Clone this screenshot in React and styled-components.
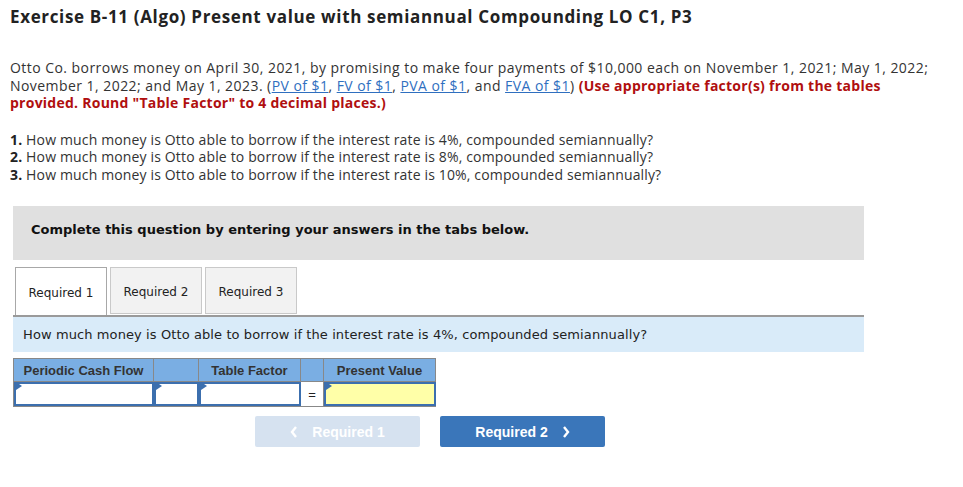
import React from "react";
import styled, { createGlobalStyle } from "styled-components";

const Global = createGlobalStyle`
  body {
    margin: 0;
    background: #ffffff;
    font-family: "Open Sans", Arial, sans-serif;
    color: #222;
  }
`;

const Page = styled.div`
  padding: 6px 0 0 10px;
  width: 953px;
`;

const Title = styled.h1`
  margin: 0;
  font-size: 17px;
  line-height: 22px;
  font-weight: 700;
  letter-spacing: 0.65px;
  color: #222;
`;

const Para = styled.p`
  margin: 31px 0 0;
  font-size: 14px;
  line-height: 17.5px;
  letter-spacing: 0.45px;
  color: #333;
  white-space: nowrap;
`;

const Link = styled.a`
  color: #2f6fbf;
  text-decoration: underline;
`;

const Red = styled.span`
  color: #b00f0f;
  font-weight: 700;
  letter-spacing: 0.25px;
`;

const List = styled.div`
  margin-top: 19px;
  font-size: 14px;
  line-height: 17.5px;
  letter-spacing: 0.15px;
  color: #333;
`;

const Num = styled.b`
  color: #222;
`;

const Notice = styled.div`
  margin: 23px 0 0 3px;
  width: 851px;
  height: 54px;
  background: #e0e0e0;
  display: flex;
  align-items: center;
  padding: 0 0 8px 18px;
  box-sizing: border-box;
  font-family: "DejaVu Sans", Verdana, sans-serif;
  font-size: 13px;
  font-weight: 700;
  color: #111;
`;

const Tabs = styled.div`
  margin: 7px 0 0 5px;
  display: flex;
  gap: 3px;
  position: relative;
  z-index: 1;
`;

const Tab = styled.div`
  width: 92px;
  height: ${(p) => (p.$active ? "48px" : "47px")};
  box-sizing: border-box;
  border: 1px solid ${(p) => (p.$active ? "#a8a8a8" : "#c9c9c9")};
  border-bottom: ${(p) => (p.$active ? "none" : "1px solid #c9c9c9")};
  background: ${(p) => (p.$active ? "#ffffff" : "#f2f2f2")};
  display: flex;
  align-items: center;
  justify-content: center;
  padding-top: ${(p) => (p.$active ? "2px" : "3px")};
  font-family: "DejaVu Sans", Verdana, sans-serif;
  font-size: 12px;
  color: #222;
`;

const Question = styled.div`
  margin-left: 3px;
  width: 851px;
  height: 37px;
  box-sizing: border-box;
  border-top: 2px solid #9a9a9a;
  background: #d9ebf9;
  display: flex;
  align-items: center;
  padding-left: 10px;
  font-family: "DejaVu Sans", Verdana, sans-serif;
  font-size: 13px;
  letter-spacing: 0.1px;
  color: #222;
`;

const Grid = styled.div`
  margin: 6px 0 0 3px;
  display: grid;
  grid-template-columns: 140px 45px 102px 23px 112px;
  grid-template-rows: 23px 24px;
  width: 422px;
  border: 1px solid #888;
  border-right: none;
`;

const Head = styled.div`
  background: #7aaee3;
  border-right: 1px solid #888;
  border-bottom: 1px solid #888;
  display: flex;
  align-items: center;
  justify-content: center;
  font-family: "Liberation Sans", Arial, sans-serif;
  font-size: 13px;
  font-weight: 700;
  color: #333;
`;

const Cell = styled.div`
  position: relative;
  background: ${(p) => (p.$yellow ? "#ffffa8" : "#ffffff")};
  border: 2px solid #3c6fae;
  box-sizing: border-box;
  &::before {
    content: "";
    position: absolute;
    top: -2px;
    left: 0;
    border-top: 4px solid transparent;
    border-bottom: 4px solid transparent;
    border-left: 6px solid #3c6fae;
  }
`;

const Eq = styled.div`
  background: #fff;
  border-right: 1px solid #888;
  display: flex;
  align-items: center;
  justify-content: center;
  font-family: "Liberation Sans", Arial, sans-serif;
  font-size: 13px;
  color: #222;
`;

const Nav = styled.div`
  margin: 9px 0 0 245px;
  display: flex;
  gap: 20px;
`;

const NavBtn = styled.button`
  width: 165px;
  height: 31px;
  border: none;
  border-radius: 2px;
  background: ${(p) => (p.$disabled ? "#d6e2f0" : "#3a76ba")};
  color: #ffffff;
  font-family: "Liberation Sans", Arial, sans-serif;
  font-size: 14px;
  font-weight: 700;
  display: flex;
  align-items: center;
  justify-content: center;
  gap: 14px;
  padding: 0;
`;

const Chevron = ({ dir }) => (
  <svg width="8" height="12" viewBox="0 0 8 12">
    <path
      d={dir === "left" ? "M6 1 L2 6 L6 11" : "M2 1 L6 6 L2 11"}
      fill="none"
      stroke="#ffffff"
      strokeWidth="2.4"
    />
  </svg>
);

export default function App() {
  return (
    <>
      <Global />
      <Page>
        <Title>
          Exercise B-11 (Algo) Present value with semiannual Compounding LO C1, P3
        </Title>
        <Para>
          Otto Co. borrows money on April 30, 2021, by promising to make four
          payments of $10,000 each on November 1, 2021; May 1, 2022;
          <br />
          November 1, 2022; and May 1, 2023. (<Link>PV of $1</Link>,{" "}
          <Link>FV of $1</Link>, <Link>PVA of $1</Link>, and{" "}
          <Link>FVA of $1</Link>){" "}
          <Red>(Use appropriate factor(s) from the tables</Red>
          <br />
          <Red>provided. Round "Table Factor" to 4 decimal places.)</Red>
        </Para>
        <List>
          <div>
            <Num>1.</Num> How much money is Otto able to borrow if the interest
            rate is 4%, compounded semiannually?
          </div>
          <div>
            <Num>2.</Num> How much money is Otto able to borrow if the interest
            rate is 8%, compounded semiannually?
          </div>
          <div>
            <Num>3.</Num> How much money is Otto able to borrow if the interest
            rate is 10%, compounded semiannually?
          </div>
        </List>
        <Notice>Complete this question by entering your answers in the tabs below.</Notice>
        <Tabs>
          <Tab $active>Required 1</Tab>
          <Tab>Required 2</Tab>
          <Tab>Required 3</Tab>
        </Tabs>
        <Question>
          How much money is Otto able to borrow if the interest rate is 4%,
          compounded semiannually?
        </Question>
        <Grid>
          <Head>Periodic Cash Flow</Head>
          <Head />
          <Head>Table Factor</Head>
          <Head />
          <Head>Present Value</Head>
          <Cell />
          <Cell />
          <Cell />
          <Eq>=</Eq>
          <Cell $yellow />
        </Grid>
        <Nav>
          <NavBtn $disabled>
            <Chevron dir="left" />
            Required 1
          </NavBtn>
          <NavBtn>
            Required 2
            <Chevron dir="right" />
          </NavBtn>
        </Nav>
      </Page>
    </>
  );
}
